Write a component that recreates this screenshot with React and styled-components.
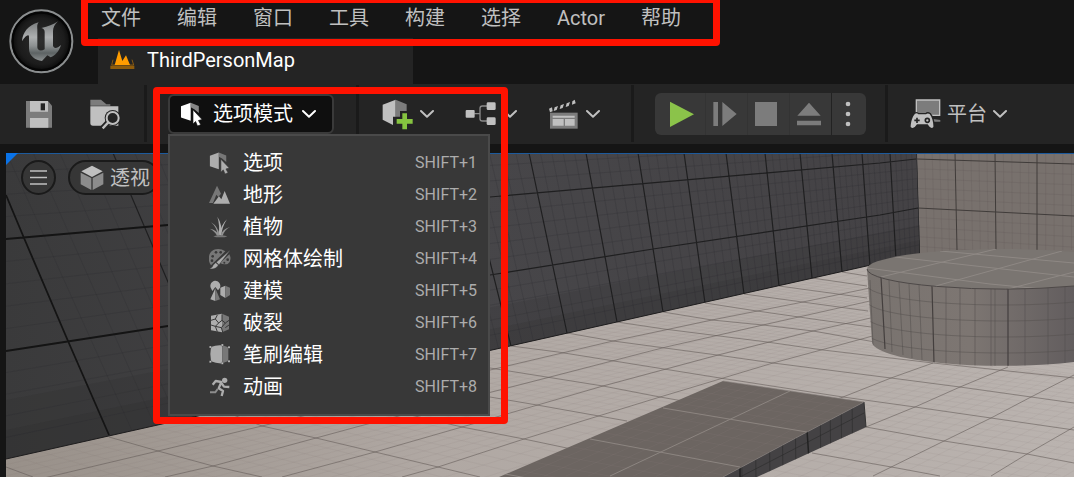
import React from "react";
import styled, { createGlobalStyle } from "styled-components";

const Global = createGlobalStyle`
  * { box-sizing: border-box; }
  html, body { margin: 0; background: #151515; }
  body, button { font-family: Roboto, "Noto Sans CJK SC", sans-serif; font-size: 20px; line-height: 24px; }
  button { margin: 0; padding: 0; border: 0; background: none; color: inherit; cursor: pointer; }
  svg { display: block; flex: none; }
`;

const Page = styled.div`
  min-height: 100vh;
  display: flex;
  flex-direction: column;
  background: #151515;
  color: #c0c0c0;
  overflow: hidden;
`;

const Header = styled.header`
  display: flex;
  height: 84px;
`;

const HeaderMain = styled.div`
  flex: 1;
  display: flex;
  flex-direction: column;
  justify-content: space-between;
  margin-left: 14px;
`;

const MenuBar = styled.nav`
  position: relative;
  align-self: flex-start;
  display: flex;
  gap: 36px;
  padding: 6px 0 0 3px;
`;

const MenuButton = styled.button`
  white-space: nowrap;
`;

const Highlight = styled.div`
  position: absolute;
  z-index: 5;
  top: ${(p) => p.$top}px;
  right: ${(p) => p.$right}px;
  bottom: ${(p) => p.$bottom}px;
  left: ${(p) => p.$left}px;
  border: 7px solid #ff1200;
  border-radius: 4px;
  pointer-events: none;
`;

const Tab = styled.button`
  align-self: flex-start;
  display: flex;
  align-items: center;
  gap: 12px;
  width: 315px;
  height: 46px;
  padding: 0 12px 2px;
  background: #242424;
  color: #fff;
`;

const Toolbar = styled.div`
  display: flex;
  align-items: stretch;
  height: 60px;
  background: #242424;
`;

const Group = styled.div`
  display: flex;
  align-items: center;
  gap: ${(p) => p.$gap || 0}px;
  padding: 0 ${(p) => p.$right}px 0 ${(p) => p.$left}px;
`;

const Divider = styled.div`
  width: 3px;
  margin: 1px 0 2px;
  background: #1a1a1a;
`;

const ToolButton = styled.button`
  display: flex;
  align-items: center;
  gap: 6px;
  white-space: nowrap;
`;

const ModeWrap = styled.div`
  position: relative;
`;

const ModeButton = styled.button`
  display: flex;
  align-items: center;
  gap: 9px;
  width: 166px;
  height: 40px;
  padding: 0 10px;
  border: 2px solid #3a3a3a;
  border-radius: 6px;
  background: #0f0f0f;
  color: #fff;
  white-space: nowrap;
`;

const Dropdown = styled.ul`
  position: absolute;
  z-index: 4;
  top: 40px;
  left: 0;
  width: 322px;
  margin: 0;
  padding: 11px 0;
  list-style: none;
  border: 2px solid #4a4a4a;
  background: #383838;
`;

const ModeItem = styled.button`
  display: flex;
  align-items: center;
  gap: 12px;
  width: 100%;
  height: 32px;
  padding: 0 11px 0 39px;
  color: #fff;
  text-align: left;
`;

const Shortcut = styled.span`
  margin-left: auto;
  font-size: 16px;
  color: #acacac;
`;

const PlayGroup = styled.div`
  display: flex;
  height: 42px;
  border-radius: 6px;
  background: #383838;
  overflow: hidden;
`;

const PlayButton = styled.button`
  display: flex;
  align-items: center;
  justify-content: flex-start;
  width: ${(p) => p.$width}px;
  padding-left: ${(p) => (p.$first ? 14 : p.$last ? 13 : 7)}px;
  border-right: ${(p) => (p.$edge ? `1px solid ${p.$edge}` : "0")};
`;

const Viewport = styled.main`
  position: relative;
  flex: 1;
  min-height: 324px;
  margin: 9px 0 0 6px;
  overflow: hidden;
`;

const SceneSvg = styled.svg`
  position: absolute;
  inset: 0;
  width: 100%;
  height: 100%;
`;

const ViewControls = styled.div`
  position: relative;
  display: flex;
  gap: 12px;
  padding: 7px 15px;
`;

const ViewButton = styled.button`
  display: flex;
  align-items: center;
  justify-content: ${(p) => (p.$round ? "center" : "flex-start")};
  gap: 6px;
  width: ${(p) => (p.$round ? 35 : 92)}px;
  height: 35px;
  padding: ${(p) => (p.$round ? 0 : "0 9px 0 10px")};
  border: 2px solid #1a1a1a;
  border-radius: 18px;
  background: #363636;
  white-space: nowrap;
`;

function Icon({ w, h, box, children }) {
  return (
    <svg width={w} height={h} viewBox={box} aria-hidden="true">
      {children}
    </svg>
  );
}

const L = "#c0c0c0";
const D = "#7c7c7c";

const Chevron = ({ color = L }) => (
  <Icon w={14} h={10} box="0 0 42 30">
    <path d="M3 6 L21 23 L39 6" fill="none" stroke={color} strokeWidth="6" strokeLinecap="round" strokeLinejoin="round" />
  </Icon>
);

const Logo = () => (
  <svg width="84" height="84" viewBox="0 0 252 252" role="img" aria-label="Unreal Engine">
    <defs>
      <linearGradient id="uMetal" x1="0" y1="0" x2="0" y2="1">
        <stop offset="0" stopColor="#777a7b" />
        <stop offset="0.4" stopColor="#adafb0" />
        <stop offset="0.62" stopColor="#8c9091" />
        <stop offset="0.8" stopColor="#5d6364" />
        <stop offset="1" stopColor="#8b8f90" />
      </linearGradient>
      <radialGradient id="uDisc">
        <stop offset="0" stopColor="#2e2e2e" />
        <stop offset="0.75" stopColor="#1c1c1c" />
        <stop offset="1" stopColor="#060606" />
      </radialGradient>
    </defs>
    <circle cx="124" cy="124" r="93" fill="url(#uDisc)" stroke="#8b8e8f" strokeWidth="6" />
    <circle cx="124" cy="124" r="86" fill="none" stroke="#050505" strokeWidth="6" />
    <path
      d="M66 124 C68 98 84 76 116 67 C110 74 112 82 112 88 V142 C112 151 122 155 134 148 V96 C134 90 131 86 124 84 C144 80 160 74 174 64 C163 74 159 84 159 94 V138 C163 147 172 145 183 135 C177 154 166 166 152 172 L142 166 L126 183 C106 180 87 168 87 146 V110 C86 101 76 108 66 124Z"
      fill="url(#uMetal)"
    />
  </svg>
);

const LevelIcon = () => (
  <Icon w={25} h={22} box="329 154 75 66">
    <path d="M338 186 L334 202 H400 L395 186" fill="none" stroke="#8a5a10" strokeWidth="3" />
    <path d="M330 204 H402 V214 H330Z" fill="#8f5c0c" />
    <path d="M343 202 L356 157 L366 190 L377 173 L389 202Z" fill="#ff9c00" />
  </Icon>
);

const SaveIcon = () => (
  <Icon w={26} h={27} box="78 302 78 81">
    <path d="M78 302 H144 L156 316 V382 H78Z" fill={D} />
    <path d="M90 302 H144 V334 H90Z M90 353 H145 V382 H90Z" fill={L} />
    <path d="M122 309 H135 V330 H122Z" fill="#242424" />
  </Icon>
);

const BrowseIcon = () => (
  <Icon w={31} h={31} box="269 296 93 93">
    <path d="M270 298 H302 L318 312 H330 V316 H270Z" fill={D} />
    <path d="M270 318 H354 V345 H300 V376 H278 Q270 376 270 368Z M296 330 H354 V376 H296Z" fill={L} />
    <circle cx="337" cy="353" r="24" fill="#242424" />
    <path d="M324 366 L307 384" stroke="#242424" strokeWidth="18" />
    <circle cx="337" cy="353" r="18" fill="#242424" stroke={L} strokeWidth="6" />
    <path d="M324 366 L307 384" stroke={L} strokeWidth="7" />
  </Icon>
);

const SelectIcon = ({ size = 24, light = "#fff", dark = "#858585", bg = "#0f0f0f" }) => (
  <Icon w={size} h={size} box="541 304 72 74">
    <path d="M543 317 L573 306 V362 L543 352Z" fill={light} />
    <path d="M573 306 L598 316 V338 L584 326 L573 320Z" fill={dark} />
    <path d="M580 328 L608 358 L597 361 L604 374 L594 378 L588 364 L580 372Z" fill={light} stroke={bg} strokeWidth="2" />
  </Icon>
);

const AddIcon = () => (
  <Icon w={32} h={31} box="97 295 96 93">
    <path d="M99 312 L138 297 V348 H130 V373 L99 357Z" fill={L} />
    <path d="M138 297 L171 311 V331 H151 V348 H138Z" fill={D} />
    <path d="M158 338 H172 V355 H189 V369 H172 V386 H158 V369 H141 V355 H158Z" fill="#86c440" />
  </Icon>
);

const BlueprintIcon = () => (
  <Icon w={32} h={26} box="346 306 96 78">
    <path d="M374 344 H391 M412 321 H398 Q391 321 391 328 V359 Q391 366 398 366 H412" fill="none" stroke="#8a8a8a" strokeWidth="4" />
    <rect x="348" y="333" width="27" height="23" rx="3" fill={L} />
    <rect x="411" y="310" width="27" height="23" rx="4" fill={L} />
    <rect x="411" y="355" width="27" height="23" rx="4" fill={L} />
  </Icon>
);

const CinematicIcon = () => (
  <Icon w={32} h={31} box="592 295 96 93">
    <path d="M595 324 L604 320 L606 332 L598 335Z M612 320 L622 316 L618 328 L609 331Z M630 314 L640 310 L636 322 L627 325Z M648 308 L658 304 L654 316 L645 319Z M665 302 L672 297 L675 308 L664 312Z" fill={L} />
    <path d="M598 336 H681 V384 H598Z" fill={D} />
    <path d="M606 345 H672 V351 H606Z M606 355 H639 V375 H606Z M643 355 H672 V375 H643Z" fill={L} />
  </Icon>
);

const PlatformIcon = () => (
  <Icon w={31} h={30} box="813 58 93 90">
    <path d="M832 61 H902 V107 H832Z" fill={D} stroke={L} strokeWidth="4" />
    <path d="M882 118 L904 121 V126 H884Z" fill={D} />
    <path d="M828 102 Q834 99 838 104 H861 Q866 99 872 103 C880 112 884 130 883 142 Q876 150 866 134 H834 Q824 150 815 142 C815 128 820 110 828 102Z" fill={L} stroke="#242424" strokeWidth="8" paintOrder="stroke" />
    <path d="M834 114 V130 M826 122 H842" stroke="#242424" strokeWidth="5" />
    <circle cx="865" cy="122" r="6" fill="none" stroke="#242424" strokeWidth="5" />
  </Icon>
);

const CubeIcon = () => (
  <Icon w={24} h={26} box="238 76 72 78">
    <path d="M274 78 L306 95 L274 112 L242 95Z" fill={L} />
    <path d="M240 99 L272 115 V151 L240 134Z M276 115 L308 99 V134 L276 151Z" fill="#8c8c8c" />
  </Icon>
);

const m = "#adadad";
const n = "#777";

const modeIcons = {
  select: <SelectIcon size={22} light={m} dark={n} bg="#383838" />,
  landscape: (
    <Icon w={22} h={22} box="177 297 66 66">
      <path d="M177 354 L201 302 L213 326 L205 336 L199 329 L189 354Z" fill={n} />
      <path d="M190 356 L207 334 L214 343 L224 318 L240 356Z" fill={m} />
    </Icon>
  ),
  foliage: (
    <Icon w={22} h={22} box="177 393 66 66">
      <path d="M202 395 Q219 420 212 451 H206 Q210 420 202 395Z M231 403 Q217 424 214 450 H209 Q212 420 231 403Z" fill={m} />
      <path d="M183 412 Q204 424 209 450 H203 Q200 426 183 412Z M240 426 Q224 434 218 452 H211 Q218 431 240 426Z M179 431 Q200 434 208 452 H201 Q194 438 179 431Z" fill="#929292" />
      <path d="M190 454 Q210 447 232 454 L224 457 H198Z" fill={n} />
    </Icon>
  ),
  paint: (
    <Icon w={22} h={22} box="177 23 66 66">
      <path d="M198 27 C176 30 170 59 183 75 L226 33 Q212 24 198 27Z M238 42 Q247 60 233 71 Q219 74 210 68Z" fill={n} />
      <g fill="#383838"><circle cx="188" cy="48" r="4" /><circle cx="198" cy="36" r="4" /><circle cx="212" cy="36" r="4" /><circle cx="186" cy="61" r="4" /><circle cx="233" cy="58" r="4" /><circle cx="223" cy="67" r="3" /></g>
      <path d="M241 29 L207 73 L199 66Z M197 67 L205 74 Q199 87 179 86 Q188 82 190 74Z" fill={m} stroke="#383838" strokeWidth="1" />
    </Icon>
  ),
  modeling: (
    <Icon w={22} h={22} box="177 119 66 66">
      <path d="M183 144 A15 15 0 1 1 210 142 L204 150 L196 140 L187 152Z" fill={m} />
      <path d="M196 144 L181 177 L196 182Z M211 142 L226 136 V173 L211 164Z" fill={m} />
      <path d="M196 144 L210 177 L196 182Z M226 136 L240 142 V164 L226 173Z" fill={n} />
    </Icon>
  ),
  fracture: (
    <Icon w={22} h={22} box="177 215 66 66">
      <path d="M183 226 L216 220 V276 L183 270Z" fill={m} />
      <path d="M216 220 L237 229 V267 L216 276Z" fill={n} />
      <path d="M183 240 L196 236 L202 224 M196 236 L206 248 L216 240 L226 248 L237 240 M206 248 L196 258 L183 254 M196 258 L202 274 M196 258 L214 262 L218 275 M214 262 L226 248 M216 240 L216 222 M226 262 L237 254" fill="none" stroke="#383838" strokeWidth="3" />
    </Icon>
  ),
  brush: (
    <Icon w={22} h={22} box="177 311 66 66">
      <path d="M183 320 Q199 313 217 315 V369 Q199 370 183 363 Q179 341 183 320Z" fill={m} />
      <path d="M217 315 L235 321 V362 L217 369Z" fill={n} />
      <path d="M178 317 h6 v6 h-6Z M214 311 h6 v6 h-6Z M234 318 h6 v6 h-6Z M178 361 h6 v6 h-6Z M214 366 h6 v6 h-6Z M234 360 h6 v6 h-6Z" fill="#ccc" stroke="#383838" strokeWidth="1" />
    </Icon>
  ),
  animation: (
    <Icon w={22} h={22} box="177 408 66 66">
      <circle cx="224" cy="421" r="8" fill={m} />
      <path d="M188 434 L197 423 L214 426 L206 445 L219 453 L215 468 M215 430 L222 440 L238 441" fill="none" stroke={m} strokeWidth="7" strokeLinejoin="round" />
      <path d="M203 447 L196 457 H180" fill="none" stroke="#8c8c8c" strokeWidth="6" />
    </Icon>
  ),
};

const menus = ["文件", "编辑", "窗口", "工具", "构建", "选择", "Actor", "帮助"];

const modes = [
  ["select", "选项"],
  ["landscape", "地形"],
  ["foliage", "植物"],
  ["paint", "网格体绘制"],
  ["modeling", "建模"],
  ["fracture", "破裂"],
  ["brush", "笔刷编辑"],
  ["animation", "动画"],
];

/* Each line of a surface is [x1, y1, x2, y2]; subdivide() fills in the fine grid between neighbours. */
const subdivide = (lines, steps = 5) =>
  lines.slice(1).flatMap((b, i) =>
    Array.from({ length: steps - 1 }, (_, k) =>
      lines[i].map((v, j) => v + ((b[j] - v) * (k + 1)) / steps)
    )
  );

const toPath = (lines) => lines.map(([a, b, c, d]) => `M${a} ${b}L${c} ${d}`).join("");
const toPolyPath = (polys) => polys.map((p) => "M" + p.map((q) => q.join(" ")).join("L")).join("");

const wallVerticals = [
  [-20, 153, 109, 435], [113, 153, 223, 411], [222, 153, 308, 391], [314, 153, 382, 375],
  [392, 153, 449, 360], [463, 153, 511, 346], [529, 153, 567, 333], [586, 153, 617, 322],
  [638, 153, 663, 312], [684, 153, 705, 303], [726, 153, 744, 294], [765, 153, 779, 286],
  [800, 153, 812, 278], [832, 153, 842, 272], [862, 153, 870, 266], [890, 153, 896, 260],
  [917, 153, 920, 254],
];

const wallCourses = [
  [[168, 225], [490, 197], [880, 163], [916, 159]],
  [[167, 326], [490, 275], [653, 249], [880, 215], [918, 208]],
];

const wallRows = [
  [6, 127, 916, 112], [6, 239, 916, 159], [6, 351, 918, 208], [6, 459, 920, 254],
];

const backVerticals = [
  [917, 153, 920, 254], [955, 153, 957, 250], [995, 153, 996, 250], [1037, 153, 1037, 250], [1080, 153, 1080, 250],
];
const backRows = [[917, 112, 1074, 112], [917, 159, 1074, 164], [918, 208, 1074, 216], [920, 256, 1074, 268]];

const floorA = [
  [[6, 487], [158, 451], [262, 426], [490, 370], [613, 341], [712, 320], [798, 303], [870, 288]],
  [[165, 477], [213, 466], [316, 438], [360, 426], [550, 377], [666, 347], [763, 325], [870, 301]],
  [[282, 477], [375, 452], [462, 427], [603, 386], [718, 355], [813, 331], [875, 317]],
  [[402, 477], [438, 467], [524, 439], [660, 397], [773, 363], [880, 334]],
  [[600, 480], [843, 397], [891, 378], [933, 363]],
  [[750, 477], [866, 427], [915, 407], [960, 387], [1008, 367]],
  [[873, 476], [944, 441], [991, 418], [1031, 397], [1074, 375]],
  [[991, 476], [1027, 454], [1074, 427]],
];

const floorB = [
  [[6, 467], [33, 477]],
  [[109, 437], [158, 451], [213, 466], [262, 477]],
  [[223, 411], [262, 426], [316, 438], [375, 452], [438, 467], [480, 477]],
  [[308, 391], [462, 427], [524, 439], [600, 455]],
  [[382, 375], [490, 397], [537, 405], [627, 421]],
  [[449, 360], [490, 368], [603, 386], [660, 397], [700, 404]],
  [[511, 346], [558, 352], [720, 378], [843, 397], [915, 407], [991, 418], [1074, 430]],
  [[567, 333], [613, 341], [717, 355], [773, 363], [891, 378], [960, 387], [1074, 403]],
  [[617, 322], [664, 329], [767, 342], [823, 350], [933, 363], [1074, 378]],
  [[663, 312], [712, 320], [763, 325], [813, 331], [875, 342]],
  [[705, 303], [757, 311], [820, 320], [871, 327]],
  [[744, 294], [868, 311]],
  [[779, 286], [867, 298]],
  [[812, 278], [867, 286]],
  [[842, 272], [867, 276]],
  [[812, 453], [897, 468], [940, 476]],
  [[866, 427], [944, 441], [1027, 454], [1074, 463]],
];

const floorFineA = [
  [6, 459, 920, 254], [6, 487, 870, 288], [100, 494, 870, 301], [220, 494, 875, 317],
  [340, 496, 880, 334], [560, 494, 933, 363], [720, 490, 1008, 367], [845, 490, 1074, 375],
  [967, 490, 1074, 427], [1060, 490, 1110, 460],
];
const floorFineB = [
  [812, 278, 1074, 318], [779, 286, 1074, 330], [744, 294, 1074, 343], [705, 303, 1074, 359],
  [663, 312, 1074, 372], [617, 322, 1074, 382], [567, 333, 1074, 403], [511, 346, 1074, 430],
  [449, 360, 1074, 463], [382, 375, 1040, 494], [308, 391, 780, 490], [223, 411, 540, 490],
  [109, 437, 310, 490], [-40, 450, 80, 495],
];

const rampSide = [852, 841, 830, 820, 795, 782, 769, 755, 741];

function Scene() {
  return (
    <SceneSvg viewBox="6 153 1068 324" preserveAspectRatio="xMinYMin slice" aria-hidden="true">
      <defs>
        <linearGradient id="wall" x1="0" x2="1" y1="0" y2="0">
          <stop offset="0" stopColor="#3a3a3b" />
          <stop offset="0.5" stopColor="#474649" />
          <stop offset="1" stopColor="#444245" />
        </linearGradient>
        <linearGradient id="floor" x1="0" x2="1" y1="0" y2="0">
          <stop offset="0" stopColor="#989089" />
          <stop offset="0.4" stopColor="#b0a8a3" />
          <stop offset="1" stopColor="#bab3af" />
        </linearGradient>
        <linearGradient id="drum" x1="0" x2="1" y1="0" y2="0">
          <stop offset="0" stopColor="#79736f" />
          <stop offset="0.5" stopColor="#7d7672" />
          <stop offset="1" stopColor="#625d5e" />
        </linearGradient>
        <clipPath id="wallClip"><path d="M6 153H917L920 254L6 459Z" /></clipPath>
        <clipPath id="backClip"><path d="M917 153H1074V256H920Z" /></clipPath>
        <clipPath id="floorClip"><path d="M6 459L920 254H1074V477H6Z" /></clipPath>
        <clipPath id="drumClip"><path d="M867 269L872 342A131 24 0 0 0 1074 362V153H867Z" /></clipPath>
        <clipPath id="drumTop"><ellipse cx="1003" cy="269" rx="136" ry="20" /></clipPath>
        <clipPath id="rampTop"><path d="M499 477L723 381L864 402L807 432L723 477Z" /></clipPath>
        <clipPath id="rampEdge"><path d="M864 402L866 427L757 477H723L807 432Z" /></clipPath>
      </defs>

      <rect x="6" y="153" width="1068" height="324" fill="url(#floor)" />
      <g clipPath="url(#floorClip)" fill="none">
        <path d={toPath(subdivide(floorFineA)) + toPath(subdivide(floorFineB))} stroke="#6f6763" strokeOpacity="0.07" />
        <path d={toPolyPath(floorA) + toPolyPath(floorB)} stroke="#655e5a" strokeOpacity="0.6" strokeWidth="1" />
      </g>

      <path d="M917 153H1074V256H920Z" fill="#78716d" />
      <g clipPath="url(#backClip)" fill="none">
        <path d={toPath(subdivide(backVerticals)) + toPath(subdivide(backRows))} stroke="#5e5855" strokeOpacity="0.22" />
        <path d={toPath(backVerticals.slice(1)) + toPath(backRows.slice(1, 3))} stroke="#403c3a" strokeWidth="1" />
      </g>

      <path d="M6 153H917L920 254L6 459Z" fill="url(#wall)" />
      <g clipPath="url(#wallClip)" fill="none">
        <path d={toPath(subdivide(wallVerticals)) + toPath(subdivide(wallRows))} stroke="#2a2a2b" strokeOpacity="0.2" />
        <path d={toPath(wallVerticals.slice(1)) + toPolyPath(wallCourses)} stroke="#1f1f20" strokeWidth="1.2" />
        <path d="M6 195L24 238L68 341L109 435M6 239L168 225M6 351L168 326" stroke="#141414" strokeWidth="1.8" />
      </g>
      <path d="M6 400L920 225V254L6 459Z" fill="#202022" opacity="0.1" />
      <path d="M6 430L920 240V254L6 459Z" fill="#202022" opacity="0.12" />
      <path d="M6 459L920 254" stroke="#1e1d1e" fill="none" />

      <path d="M867 269L872 342A131 24 0 0 0 1074 362V269Z" fill="url(#drum)" />
      <g clipPath="url(#drumClip)" fill="none" stroke="#524d4b">
        <path
          d={[16, 32, 48, 64].map((o) => `M867 ${269 + o}A136 20 0 0 0 1139 ${269 + o}`).join("")}
          strokeOpacity="0.45"
        />
        <path d="M870 280L873 345M889 280L892 352M899 282L903 355M909 284L912 358M919 285L922 360M946 287V364M960 288V366M975 289V366M991 289V367M995 289V367M1025 289V366M1048 288V365M1065 286V363" strokeOpacity="0.5" />
        <path d="M881 277L885 349M932 286L934 363M1008 289V367" stroke="#443f3e" strokeWidth="1.2" />
      </g>
      <ellipse cx="1003" cy="269" rx="136" ry="20" fill="#7a7571" />
      <g clipPath="url(#drumTop)" fill="none" stroke="#8e8884">
        <path d="M881 277L996 249M932 287L1062 251M1008 289L1074 272L1130 258M867 268L990 284L1074 292M895 257L1074 277M940 251L1074 263" />
      </g>
      <path d="M867 269A136 20 0 0 0 1074 286" fill="none" stroke="#4e4948" />

      <path d="M499 477L723 381L864 402L807 432L723 477Z" fill="#6c6561" />
      <g clipPath="url(#rampTop)" fill="none">
        <path
          d={toPath(subdivide([[723, 381, 500, 476], [790, 391, 610, 476], [864, 402, 725, 477]])) +
            toPath(subdivide([[723, 381, 864, 402], [663, 408, 807, 432], [590, 439, 740, 467], [500, 478, 650, 506]]))}
          stroke="#8a827d"
          strokeOpacity="0.15"
        />
        <path d="M663 408L807 432M590 439L740 467M790 391L610 476M505 474L560 484" stroke="#8c8580" />
      </g>
      <path d="M864 402L866 427L757 477H723L807 432Z" fill="#444244" />
      <g clipPath="url(#rampEdge)" fill="none">
        <path d={rampSide.map((x) => `M${x} 395L${x + 1} 480`).join("") + "M866 412L740 477"} stroke="#2c2b2c" strokeOpacity="0.6" />
        <path d="M807 430L809 460M740 465V477" stroke="#222" strokeWidth="1.5" />
      </g>
      <path d="M723 381L864 402L807 432L723 477" fill="none" stroke="#8b8480" strokeOpacity="0.6" />
      <path d="M864 402L866 427" stroke="#333" />

      <path d="M6 153.500H1074" stroke="#1d5a9c" />
      <path d="M6 153H18L6 165Z" fill="#0a73e8" />
    </SceneSvg>
  );
}

export default function App() {
  return (
    <Page>
      <Global />
      <Header>
        <Logo />
        <HeaderMain>
          <MenuBar aria-label="菜单">
            {menus.map((label) => (
              <MenuButton key={label}>{label}</MenuButton>
            ))}
            <Highlight $top={-4} $right={-39} $bottom={-16} $left={-17} />
          </MenuBar>
          <Tab>
            <LevelIcon />
            ThirdPersonMap
          </Tab>
        </HeaderMain>
      </Header>

      <Toolbar>
        <Group $left={26} $right={23} $gap={38}>
          <ToolButton aria-label="保存"><SaveIcon /></ToolButton>
          <ToolButton aria-label="浏览"><BrowseIcon /></ToolButton>
        </Group>
        <Divider />
        <Group $left={21} $right={22}>
          <ModeWrap>
            <ModeButton aria-expanded="true">
              <SelectIcon />
              选项模式
              <Chevron color="#fff" />
            </ModeButton>
            <Dropdown>
              {modes.map(([icon, label], i) => (
                <li key={icon}>
                  <ModeItem>
                    {modeIcons[icon]}
                    {label}
                    <Shortcut>SHIFT+{i + 1}</Shortcut>
                  </ModeItem>
                </li>
              ))}
            </Dropdown>
            <Highlight $top={-7} $right={-174} $bottom={-290} $left={-15} />
          </ModeWrap>
        </Group>
        <Divider />
        <Group $left={23} $right={31} $gap={31}>
          <ToolButton aria-label="添加"><AddIcon /><Chevron /></ToolButton>
          <ToolButton aria-label="蓝图"><BlueprintIcon /><Chevron /></ToolButton>
          <ToolButton aria-label="过场动画"><CinematicIcon /><Chevron /></ToolButton>
        </Group>
        <Divider />
        <Group $left={21} $right={19}>
          <PlayGroup>
            <PlayButton $first $width={51} $edge="#333" aria-label="播放">
              <Icon w={26} h={26} box="87 60 78 78"><path d="M90 62L162 100L90 138Z" fill="#8bc34a" /></Icon>
            </PlayButton>
            <PlayButton $width={42} $edge="#333" aria-label="逐帧">
              <Icon w={24} h={24} box="219 66 72 72"><path d="M220 66H234V138H220ZM247 66L290 102L247 138Z" fill={D} /></Icon>
            </PlayButton>
            <PlayButton $width={42} $edge="#333" aria-label="停止">
              <Icon w={22} h={24} box="345 66 66 72"><path d="M345 66H411V138H345Z" fill={D} /></Icon>
            </PlayButton>
            <PlayButton $width={42} $edge="#222" aria-label="弹出">
              <Icon w={24} h={24} box="468 64 72 72"><path d="M504 66L539 105H469ZM468 120H540V134H468Z" fill={D} /></Icon>
            </PlayButton>
            <PlayButton $last $width={34} aria-label="更多">
              <Icon w={6} h={26} box="619 63 18 78">
                <circle cx="628" cy="72" r="7" fill={L} />
                <circle cx="628" cy="102" r="7" fill={L} />
                <circle cx="628" cy="132" r="7" fill={L} />
              </Icon>
            </PlayButton>
          </PlayGroup>
        </Group>
        <Divider />
        <Group $left={22} $right={0}>
          <ToolButton><PlatformIcon />平台<Chevron /></ToolButton>
        </Group>
      </Toolbar>

      <Viewport>
        <Scene />
        <ViewControls>
          <ViewButton $round aria-label="视口选项">
            <Icon w={17} h={15} box="0 0 17 15"><path d="M0 1H17M0 7.500H17M0 14H17" stroke={L} strokeWidth="1.300" /></Icon>
          </ViewButton>
          <ViewButton><CubeIcon />透视</ViewButton>
        </ViewControls>
      </Viewport>
    </Page>
  );
}
